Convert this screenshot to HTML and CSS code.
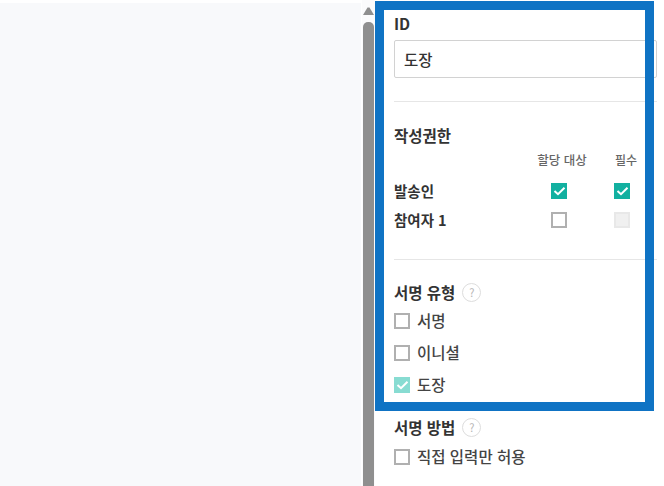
FILE: index.html
```
<!DOCTYPE html>
<html lang="ko">
<head>
<meta charset="utf-8">
<title>도장</title>
<link rel="stylesheet" href="styles.css">
</head>
<body>
<div class="page">
  <div class="canvas"></div>
  <div class="scrollbar">
    <svg class="arrow" width="11" height="8" viewBox="0 0 11 8"><path d="M4.5 0.5h2L11 8H0z" fill="#8f8f8f"/></svg>
    <div class="thumb"></div>
  </div>
  <div class="panel">
    <div class="title id-title">ID</div>
    <div class="input">도장</div>
    <hr class="rule rule-first">
    <div class="title perm-title">작성권한</div>
    <div class="perm">
      <span></span><span class="head head-assign">할당 대상</span><span class="head head-req">필수</span>
      <span class="who">발송인</span><span class="box on"><svg width="13" height="10" viewBox="0 0 13 10"><path d="M1.5 5l3.5 3.2 6.5-6.4" fill="none" stroke="#fff" stroke-width="2"/></svg></span><span class="box on"><svg width="13" height="10" viewBox="0 0 13 10"><path d="M1.5 5l3.5 3.2 6.5-6.4" fill="none" stroke="#fff" stroke-width="2"/></svg></span>
      <span class="who">참여자 1</span><span class="box"></span><span class="box off"></span>
    </div>
    <hr class="rule rule-second">
    <div class="title type-title">서명 유형 <span class="help">?</span></div>
    <div class="options">
      <div class="opt"><span class="box"></span><span class="lbl">서명</span></div>
      <div class="opt"><span class="box"></span><span class="lbl">이니셜</span></div>
      <div class="opt"><span class="box soft"><svg width="13" height="10" viewBox="0 0 13 10"><path d="M1.5 5l3.5 3.2 6.5-6.4" fill="none" stroke="#fff" stroke-width="2"/></svg></span><span class="lbl">도장</span></div>
    </div>
    <div class="title method-title">서명 방법 <span class="help">?</span></div>
    <div class="opt method-opt"><span class="box"></span><span class="lbl">직접 입력만 허용</span></div>
  </div>
  <div class="highlight"></div>
</div>
</body>
</html>
```

FILE: styles.css
```
* { box-sizing: border-box; }
html, body { margin: 0; height: 100%; background: #fff; overflow: hidden; }
body { font-family: "Noto Sans CJK KR", "Noto Sans", sans-serif; color: #333; }
.page { position: relative; display: flex; width: 664px; height: 486px; overflow: hidden; }
.canvas { width: 361px; margin-top: 3px; background: #f8f9fb; flex: none; }
.scrollbar { width: 13px; margin-left: 1px; flex: none; display: flex; flex-direction: column; align-items: center; padding-top: 7px; background: #fbfbfc; }
.arrow { display: block; flex: none; }
.thumb { width: 11px; flex: 1; margin-top: 7px; background: #8f8f8f; border-radius: 5px 5px 0 0; }
.panel { width: 263px; margin-left: 19px; flex: none; }
.title { font-size: 15.5px; font-weight: 700; line-height: 20px; color: #333; white-space: nowrap; }
.id-title { margin-top: 13px; }
.input { height: 38px; margin-top: 7px; width: 263px; border: 1px solid #d2d2d2; border-radius: 2px; padding-left: 9px; font-size: 15.5px; font-weight: 500; line-height: 36px; background: #fff; }
.rule { height: 1px; margin: 0; border: 0; background: #e6e6e6; width: 263px; }
.rule-first { margin-top: 23px; }
.perm-title { margin-top: 23px; }
.perm { display: grid; grid-template-columns: 110px 16px 16px; column-gap: 47px; align-items: center; justify-items: center; grid-template-rows: 16px 16px 16px; row-gap: 13px; margin-top: 9px; }
.perm .who { justify-self: start; font-size: 14.5px; font-weight: 700; line-height: 16px; white-space: nowrap; }
.head { font-size: 12.5px; font-weight: 500; color: #666; white-space: nowrap; line-height: 16px; transform: translateY(-2px); }
.head-assign { transform: translate(3px, -2px); }
.head-req { font-size: 12px; transform: translate(4px, -2px); }
.box { display: flex; align-items: center; justify-content: center; width: 16px; height: 16px; border: 2px solid #b0b0b0; background: #fff; flex: none; }
.box.on { background: #12b0a0; border: 0; }
.box.off { background: #f0f0f0; border: 2px solid #e8e8e8; }
.box.soft { background: #88dcd2; border: 0; }
.rule-second { margin-top: 31px; }
.type-title { margin-top: 22px; display: flex; align-items: center; gap: 7px; }
.help { display: inline-flex; width: 19px; height: 19px; align-items: center; justify-content: center; border: 1px solid #ddd; border-radius: 50%; font-size: 11px; font-weight: 400; color: #b5b5b5; }
.options { display: flex; flex-direction: column; gap: 10px; margin-top: 8px; }
.opt { display: flex; align-items: center; gap: 7px; font-size: 15.5px; font-weight: 500; height: 22px; color: #444; white-space: nowrap; }
.lbl { margin-bottom: 2px; }
.method-title { margin-top: 21px; display: flex; align-items: center; gap: 7px; }
.method-opt { margin-top: 9px; }
.highlight { position: absolute; left: 375px; top: 1px; width: 279px; height: 410px; border: 9px solid #0f73c4; pointer-events: none; }
```
